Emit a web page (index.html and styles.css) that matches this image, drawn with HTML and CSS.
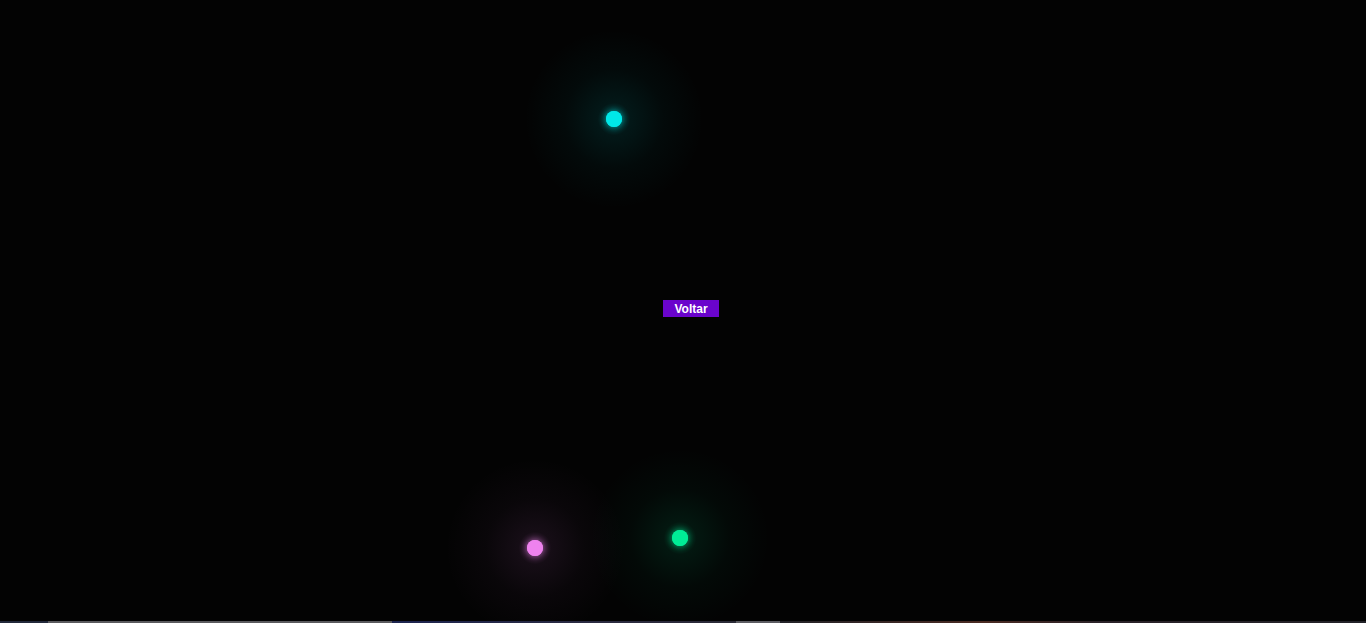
FILE: index.html
```html
<!DOCTYPE html>
<html lang="pt">
<head>
<meta charset="utf-8">
<title>Voltar</title>
<link rel="stylesheet" href="styles.css">
</head>
<body>
<div class="stage">
  <span class="orb orb-cyan"></span>
  <span class="orb orb-pink"></span>
  <span class="orb orb-green"></span>
  <div class="center">
    <button class="back">Voltar</button>
  </div>
</div>
<div class="taskbar">
  <span class="seg seg-a"></span>
  <span class="seg seg-b"></span>
  <span class="seg seg-c"></span>
  <span class="seg seg-d"></span>
  <span class="seg seg-e"></span>
  <span class="seg seg-f"></span>
</div>
</body>
</html>
```
FILE: styles.css
```css
html, body {
  margin: 0;
  padding: 0;
  background: #030303;
  height: 623px;
  overflow: hidden;
}
body {
  display: flex;
  flex-direction: column;
  font-family: "Liberation Sans", Arial, sans-serif;
}
.stage {
  position: relative;
  flex: 1;
}
.center {
  position: relative;
  z-index: 2;
  padding: 300px 0 0 663px;
}
.back {
  display: block;
  margin: 0;
  border: 0;
  background: #6a04cc;
  color: #fff;
  font-family: "Liberation Sans", Arial, sans-serif;
  font-weight: bold;
  font-size: 12px;
  line-height: 18px;
  height: 17px;
  width: 56px;
  padding: 0;
  text-align: center;
}
.orb {
  position: absolute;
  width: 16px;
  height: 16px;
  margin: -8px 0 0 -8px;
  border-radius: 50%;
}
.orb::before {
  content: "";
  position: absolute;
  left: -82px;
  top: -82px;
  width: 180px;
  height: 180px;
  border-radius: 50%;
  background: radial-gradient(circle closest-side, var(--glow-a) 0, var(--glow-b) 18%, var(--glow-c) 55%, transparent 100%);
}
.orb::after {
  content: "";
  position: absolute;
  inset: 0;
  border-radius: 50%;
  background: inherit;
  box-shadow: 0 0 5px 1px var(--glow-a);
}
.orb-cyan {
  left: 614px;
  top: 119px;
  background: #00e8e8;
  --glow-a: rgba(0, 230, 230, 0.4);
  --glow-b: rgba(0, 230, 230, 0.09);
  --glow-c: rgba(0, 230, 230, 0.03);
}
.orb-pink {
  left: 535px;
  top: 548px;
  background: #ee82ee;
  --glow-a: rgba(238, 130, 238, 0.4);
  --glow-b: rgba(238, 130, 238, 0.08);
  --glow-c: rgba(238, 130, 238, 0.028);
}
.orb-green {
  left: 680px;
  top: 538px;
  background: #00ec96;
  --glow-a: rgba(0, 236, 150, 0.4);
  --glow-b: rgba(0, 236, 150, 0.085);
  --glow-c: rgba(0, 236, 150, 0.028);
}
.taskbar {
  position: relative;
  z-index: 3;
  display: flex;
  height: 2px;
  background: #1c1e26;
}
.seg { height: 2px; }
.seg-a { width: 48px; background: #22283a; }
.seg-b { width: 344px; background: #5a5a5e; }
.seg-c { width: 344px; background: linear-gradient(90deg, #1c2450, #2a2a40 60%, #2a2a36); }
.seg-d { width: 44px; background: #5c5c62; }
.seg-e { width: 580px; background: linear-gradient(90deg, #222228, #4a2a22 35%, #2a2228 55%, #222228); }
.seg-f { flex: 1; background: #222228; }
```
